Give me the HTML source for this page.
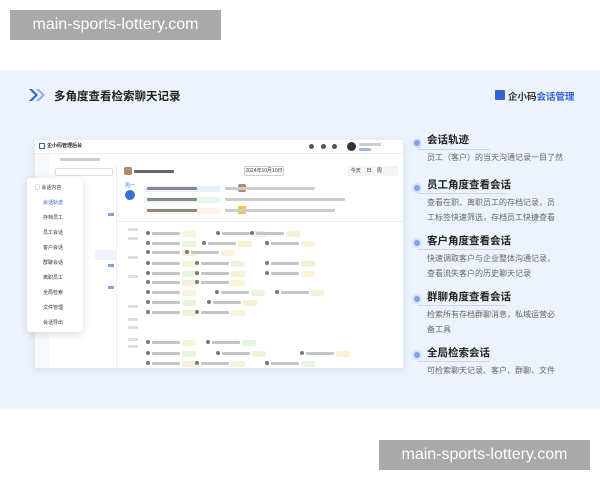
<!DOCTYPE html>
<html><head><meta charset="utf-8"><style>
*{margin:0;padding:0;box-sizing:border-box}
body{width:600px;height:480px;position:relative;background:#fff;font-family:"Liberation Sans","Noto Sans CJK SC",sans-serif;overflow:hidden}
.abs{position:absolute}
.wm{position:absolute;background:#a9a9a9;color:#fff;font-size:16px;line-height:30px;text-align:center;width:211px;height:30px}
.panel{position:absolute;left:0;top:70px;width:600px;height:339px;background:#edf3fc}
.t{position:absolute;font-size:10.5px;font-weight:bold;color:#222;white-space:nowrap}
.d{position:absolute;font-size:8px;color:#666;line-height:15px;white-space:nowrap}
.dot{position:absolute;width:10px;height:10px;border-radius:50%;background:#7ea3e6;border:2px solid #d5e2f8}
.ul{position:absolute;height:1px;background:#c6d6ef}
.win{position:absolute;left:35px;top:140px;width:368px;height:228px;background:#fff;box-shadow:0 2px 8px rgba(100,130,180,.2)}
.s{position:absolute;height:3px;background:#ccc;border-radius:1px}
.row{position:absolute;height:8px}
.chip{position:absolute;height:6px;border-radius:2px}
.pop{position:absolute;left:27px;top:178px;width:56px;height:154px;background:#fff;box-shadow:0 2px 8px rgba(0,0,0,.15);border-radius:3px}
.pi{position:absolute;left:16px;font-size:5px;color:#333}
</style></head><body>
<div class="wm" style="left:10px;top:10px">main-sports-lottery.com</div>
<div class="panel"></div>
<svg class="abs" style="left:27px;top:87px" width="20" height="16"><path d="M2 2 L8 8 L2 14 L5 14 L11 8 L5 2Z" fill="#2f63d6"/><path d="M9 2 L15 8 L9 14 L12 14 L18 8 L12 2Z" fill="#8fb0ee"/></svg>
<div class="abs" style="left:54px;top:88px;font-size:11.5px;font-weight:bold;color:#222">多角度查看检索聊天记录</div>
<div class="abs" style="left:495px;top:90px;width:10px;height:10px;background:#2f63d6;border-radius:1px"></div>
<div class="abs" style="left:508px;top:89px;font-size:9.5px;font-weight:bold;color:#333">企小码<span style="color:#2f63d6">会话管理</span></div>

<div class="win">
 <div class="abs" style="left:0;top:0;width:368px;height:14px;border-bottom:1px solid #eee"></div>
 <div class="abs" style="left:4px;top:3px;width:6px;height:6px;border:1px solid #2f63d6"></div>
 <div class="abs" style="left:12px;top:2px;font-size:5px;font-weight:bold;color:#222">企小码管理后台</div>
 <div class="abs" style="left:274px;top:4px;width:5px;height:5px;border-radius:50%;background:#555"></div>
 <div class="abs" style="left:286px;top:4px;width:5px;height:5px;border-radius:50%;background:#555"></div>
 <div class="abs" style="left:297px;top:4px;width:5px;height:5px;border-radius:50%;background:#555"></div>
 <div class="abs" style="left:312px;top:2px;width:9px;height:9px;border-radius:50%;background:#333"></div>
 <div class="s" style="left:324px;top:3px;width:22px"></div>
 <div class="s" style="left:324px;top:8px;width:12px;background:#9bb6ea"></div>
 <div class="s" style="left:25px;top:18px;width:40px"></div>
 <div class="abs" style="left:0;top:14px;width:14px;height:214px;background:#f7f8fa"></div>
 <div class="abs" style="left:14px;top:26px;width:68px;height:202px;border-right:1px solid #eee"></div>
 <div class="abs" style="left:20px;top:28px;width:58px;height:8px;border:1px solid #ddd;border-radius:2px"></div>
 <div class="abs" style="left:73px;top:73px;width:6px;height:3px;background:#7ea3e6"></div>
 <div class="abs" style="left:73px;top:124px;width:6px;height:3px;background:#7ea3e6"></div>
 <div class="abs" style="left:73px;top:146px;width:6px;height:3px;background:#7ea3e6"></div>
 <div class="abs" style="left:60px;top:110px;width:22px;height:10px;background:#eef2fb"></div>
 <div class="abs" style="left:89px;top:27px;width:8px;height:8px;background:#b08a6a;border-radius:2px"></div>
 <div class="s" style="left:99px;top:30px;width:40px;background:#666"></div>
 <div class="abs" style="left:209px;top:26px;width:40px;height:10px;border:1px solid #ccc;border-radius:2px;font-size:5px;line-height:8px;text-align:center;color:#333">2024年10月10日</div>
 <div class="abs" style="left:313px;top:26px;width:50px;height:10px;background:#f3f4f6;font-size:5px;line-height:10px;color:#333">&nbsp;&nbsp;今天&nbsp;&nbsp;&nbsp;&nbsp;日&nbsp;&nbsp;&nbsp;&nbsp;周</div>
 <div class="abs" style="left:90px;top:50px;width:10px;height:10px;border-radius:50%;background:#3a6fd8"></div>
 <div class="abs" style="left:90px;top:42px;font-size:5px;color:#3a6fd8">周一</div>
 <div class="abs" style="left:109px;top:46px;width:76px;height:6px;background:#e8efff"></div>
 <div class="abs" style="left:109px;top:57px;width:76px;height:6px;background:#eaf6ea"></div>
 <div class="abs" style="left:109px;top:68px;width:76px;height:6px;background:#fdf3e6"></div>
 <div class="s" style="left:112px;top:47px;width:50px;background:#888"></div>
 <div class="s" style="left:112px;top:58px;width:50px;background:#888"></div>
 <div class="s" style="left:112px;top:69px;width:50px;background:#888"></div>
 <div class="abs" style="left:203px;top:44px;width:8px;height:8px;background:#b08a6a;border-radius:2px"></div>
 <div class="abs" style="left:203px;top:66px;width:8px;height:8px;background:#f2c43c;border-radius:1px"></div>
 <div class="s" style="left:190px;top:47px;width:90px"></div>
 <div class="s" style="left:190px;top:58px;width:120px"></div>
 <div class="s" style="left:190px;top:69px;width:110px"></div>
 <div class="abs" style="left:82px;top:81px;width:286px;height:1px;background:#eee"></div>
</div>
<div id="rows"></div>
<div class="pop">
 <div class="pi" style="top:6px;left:8px">▢ 会话内容</div>
 <div class="pi" style="top:21px;color:#2f63d6">会话轨迹</div>
 <div class="pi" style="top:36px">存档员工</div>
 <div class="pi" style="top:51px">员工会话</div>
 <div class="pi" style="top:66px">客户会话</div>
 <div class="pi" style="top:81px">群聊会话</div>
 <div class="pi" style="top:96px">离职员工</div>
 <div class="pi" style="top:111px">全局检索</div>
 <div class="pi" style="top:126px">文件管理</div>
 <div class="pi" style="top:141px">会话导出</div>
</div>

<div class="dot" style="left:412px;top:138px"></div><div class="t" style="left:427px;top:132px">会话轨迹</div><div class="ul" style="left:418px;top:149px;width:72px"></div>
<div class="d" style="left:427px;top:150px">员工（客户）的当天沟通记录一目了然</div>
<div class="dot" style="left:412px;top:183px"></div><div class="t" style="left:427px;top:177px">员工角度查看会话</div><div class="ul" style="left:418px;top:193px;width:88px"></div>
<div class="d" style="left:427px;top:195px">查看在职、离职员工的存档记录，员<br>工标签快速筛选，存档员工快捷查看</div>
<div class="dot" style="left:412px;top:238px"></div><div class="t" style="left:427px;top:233px">客户角度查看会话</div><div class="ul" style="left:418px;top:249px;width:88px"></div>
<div class="d" style="left:427px;top:251px">快速调取客户与企业整体沟通记录，<br>查看流失客户的历史聊天记录</div>
<div class="dot" style="left:412px;top:294px"></div><div class="t" style="left:427px;top:289px">群聊角度查看会话</div><div class="ul" style="left:418px;top:305px;width:88px"></div>
<div class="d" style="left:427px;top:307px">检索所有存档群聊消息，私域运营必<br>备工具</div>
<div class="dot" style="left:412px;top:350px"></div><div class="t" style="left:427px;top:345px">全局检索会话</div><div class="ul" style="left:418px;top:361px;width:72px"></div>
<div class="d" style="left:427px;top:363px">可检索聊天记录、客户、群聊、文件</div>

<div class="wm" style="left:379px;top:440px">main-sports-lottery.com</div>
<script>
var ys=[233,243,252,263,273,282,292,302,312,342,353,363],h='';
var pat=[[146,216,250],[146,202,265],[146,185],[146,195,265],[146,195,265],[146,195],[146,215,275],[146,207],[146,195],[146,206],[146,216,300],[146,195,265]];
ys.forEach(function(y,i){pat[i].forEach(function(x,j){var c=['#fbf3d8','#e6f5e0','#f6f0d6'][(i+j)%3];
h+='<div class="abs" style="left:'+x+'px;top:'+(y-2)+'px;width:4px;height:4px;border-radius:50%;background:#777"></div><div class="s" style="left:'+(x+6)+'px;top:'+(y-1)+'px;width:28px;background:#c4c4c4"></div><div class="chip" style="left:'+(x+36)+'px;top:'+(y-2)+'px;width:14px;background:'+c+'"></div>';});});
[228,237,256,275,305,318,326,338,345].forEach(function(y){h+='<div class="s" style="left:128px;top:'+y+'px;width:10px;background:#ddd"></div>'});
document.getElementById('rows').innerHTML=h;
</script>
</body></html>
